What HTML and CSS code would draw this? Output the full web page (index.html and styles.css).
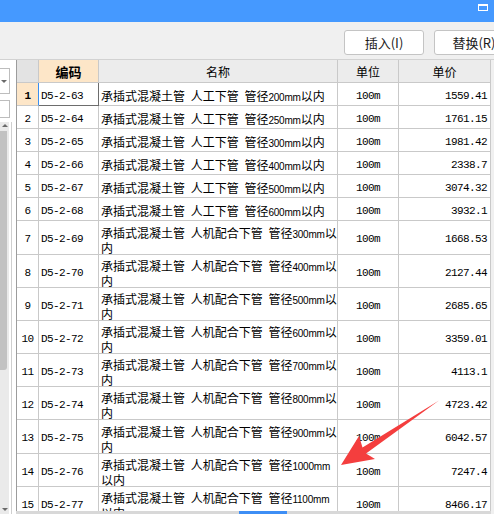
FILE: index.html
```html
<!DOCTYPE html>
<html lang="zh">
<head>
<meta charset="utf-8">
<link rel="stylesheet" href="styles.css">
</head>
<body>
<div class="titlebar"><div class="max"></div></div>
<div class="toolbar">
  <button class="btn">插入(I)</button>
  <button class="btn">替换(R)</button>
</div>
<div class="main">
  <div class="side">
    <div class="combo"><span class="tri-down"></span></div>
    <div class="input"></div>
    <div class="vscroll">
      <span class="tri-up"></span>
      <div class="thumb"></div>
      <span class="tri-down low"></span>
    </div>
  </div>
  <div class="right">
    <div class="grid">
      <div class="c h corner"></div>
      <div class="c h sel">编码</div>
      <div class="c h">名称</div>
      <div class="c h">单位</div>
      <div class="c h">单价</div>

      <div class="c m num sel">1</div>
      <div class="c m code focus">D5-2-63</div>
      <div class="c name"><span>承插式混凝土管 人工下管 管径<span class="l">200mm</span>以内</span></div>
      <div class="c m unit">100m</div>
      <div class="c m price">1559.41</div>

      <div class="c m num">2</div>
      <div class="c m code">D5-2-64</div>
      <div class="c name"><span>承插式混凝土管 人工下管 管径<span class="l">250mm</span>以内</span></div>
      <div class="c m unit">100m</div>
      <div class="c m price">1761.15</div>

      <div class="c m num">3</div>
      <div class="c m code">D5-2-65</div>
      <div class="c name"><span>承插式混凝土管 人工下管 管径<span class="l">300mm</span>以内</span></div>
      <div class="c m unit">100m</div>
      <div class="c m price">1981.42</div>

      <div class="c m num">4</div>
      <div class="c m code">D5-2-66</div>
      <div class="c name"><span>承插式混凝土管 人工下管 管径<span class="l">400mm</span>以内</span></div>
      <div class="c m unit">100m</div>
      <div class="c m price">2338.7</div>

      <div class="c m num">5</div>
      <div class="c m code">D5-2-67</div>
      <div class="c name"><span>承插式混凝土管 人工下管 管径<span class="l">500mm</span>以内</span></div>
      <div class="c m unit">100m</div>
      <div class="c m price">3074.32</div>

      <div class="c m num">6</div>
      <div class="c m code">D5-2-68</div>
      <div class="c name"><span>承插式混凝土管 人工下管 管径<span class="l">600mm</span>以内</span></div>
      <div class="c m unit">100m</div>
      <div class="c m price">3932.1</div>

      <div class="c m num">7</div>
      <div class="c m code">D5-2-69</div>
      <div class="c name two"><span>承插式混凝土管 人机配合下管 管径<span class="l">300mm</span>以<br>内</span></div>
      <div class="c m unit">100m</div>
      <div class="c m price">1668.53</div>

      <div class="c m num">8</div>
      <div class="c m code">D5-2-70</div>
      <div class="c name two"><span>承插式混凝土管 人机配合下管 管径<span class="l">400mm</span>以<br>内</span></div>
      <div class="c m unit">100m</div>
      <div class="c m price">2127.44</div>

      <div class="c m num">9</div>
      <div class="c m code">D5-2-71</div>
      <div class="c name two"><span>承插式混凝土管 人机配合下管 管径<span class="l">500mm</span>以<br>内</span></div>
      <div class="c m unit">100m</div>
      <div class="c m price">2685.65</div>

      <div class="c m num">10</div>
      <div class="c m code">D5-2-72</div>
      <div class="c name two"><span>承插式混凝土管 人机配合下管 管径<span class="l">600mm</span>以<br>内</span></div>
      <div class="c m unit">100m</div>
      <div class="c m price">3359.01</div>

      <div class="c m num">11</div>
      <div class="c m code">D5-2-73</div>
      <div class="c name two"><span>承插式混凝土管 人机配合下管 管径<span class="l">700mm</span>以<br>内</span></div>
      <div class="c m unit">100m</div>
      <div class="c m price">4113.1</div>

      <div class="c m num">12</div>
      <div class="c m code">D5-2-74</div>
      <div class="c name two"><span>承插式混凝土管 人机配合下管 管径<span class="l">800mm</span>以<br>内</span></div>
      <div class="c m unit">100m</div>
      <div class="c m price">4723.42</div>

      <div class="c m num">13</div>
      <div class="c m code">D5-2-75</div>
      <div class="c name two"><span>承插式混凝土管 人机配合下管 管径<span class="l">900mm</span>以<br>内</span></div>
      <div class="c m unit">100m</div>
      <div class="c m price">6042.57</div>

      <div class="c m num">14</div>
      <div class="c m code">D5-2-76</div>
      <div class="c name two"><span>承插式混凝土管 人机配合下管 管径<span class="l">1000mm</span><br>以内</span></div>
      <div class="c m unit">100m</div>
      <div class="c m price">7247.4</div>

      <div class="c m num">15</div>
      <div class="c m code">D5-2-77</div>
      <div class="c name two"><span>承插式混凝土管 人机配合下管 管径<span class="l">1100mm</span><br>以内</span></div>
      <div class="c m unit">100m</div>
      <div class="c m price">8466.17</div>
    </div>
    <div class="hscroll"><div class="hthumb"></div></div>
  </div>
</div>
<svg class="arrow" width="494" height="514" viewBox="0 0 494 514">
  <polygon points="439,400.5 362.5,447.5 359,436 341,465 375,459 366,453.5" fill="#f43e3e"/>
</svg>
</body>
</html>
```
FILE: styles.css
```css
* {
  box-sizing: border-box;
  margin: 0;
  padding: 0;
}

body {
  width: 494px;
  height: 514px;
  overflow: hidden;
  background: #f0f0f0;
  font-family: "Noto Sans CJK SC", sans-serif;
  position: relative;
}

.titlebar {
  height: 22px;
  background: #4599ff;
  display: flex;
  justify-content: flex-end;
  padding: 4px 6px 0 0;
}

.max {
  width: 10px;
  height: 7px;
  border: 1px solid #fff;
  border-top-width: 2px;
}

.toolbar {
  height: 38px;
  border-bottom: 1px solid #d2d2d2;
  display: flex;
  gap: 10px;
  padding: 8px 0 0 344px;
  overflow: hidden;
}

.btn {
  flex: none;
  width: 80px;
  height: 25px;
  background: #fff;
  border: 1px solid #c4c4c4;
  border-radius: 3px;
  font-family: "Noto Sans CJK SC", sans-serif;
  font-size: 13px;
  color: #1a1a1a;
  display: flex;
  align-items: center;
  justify-content: center;
}

.main {
  display: flex;
  height: 454px;
}

.side {
  width: 16px;
  flex: none;
  background: #fff;
  display: flex;
  flex-direction: column;
  padding-top: 8px;
}

.combo {
  width: 10px;
  height: 26px;
  border: 1px solid #bdbdbd;
  border-left: none;
  display: flex;
  align-items: center;
  padding-left: 1px;
}

.tri-down {
  width: 0;
  height: 0;
  border-top: 3px solid #6a6a6a;
  border-left: 3px solid transparent;
  border-right: 3px solid transparent;
}

.tri-up {
  width: 0;
  height: 0;
  margin: 2px 0 0 2px;
  border-bottom: 3px solid #6a6a6a;
  border-left: 3px solid transparent;
  border-right: 3px solid transparent;
}

.input {
  width: 10px;
  height: 18px;
  margin-top: 6px;
  border: 1px solid #bdbdbd;
  border-left: none;
}

.vscroll {
  margin-top: 4px;
  flex: 1;
  width: 12px;
  border-right: 1px solid #cfcfcf;
  background: linear-gradient(to right, #eaeaea 9px, #fff 9px);
  display: flex;
  flex-direction: column;
}

.thumb {
  margin-top: 4px;
  width: 7px;
  height: 239px;
  background: #c2c2c2;
  border-radius: 0 0 3px 0;
}

.low {
  margin: auto 0 3px 2px;
}

.right {
  display: flex;
  flex-direction: column;
  width: 475px;
  flex: none;
}

.grid {
  height: 451px;
  overflow: hidden;
  display: grid;
  grid-template-columns: 22px 60px 239px 61px 92px;
  grid-template-rows: repeat(7, 23px) 34px repeat(5, 33px) 34px 33px 33px;
  border-left: 1px solid #9c9c9c;
  background: #fff;
}

.hscroll {
  height: 3px;
  background: #d8d8d8;
  display: flex;
}

.hthumb {
  margin-left: 223px;
  width: 48px;
  background: #3d8ef5;
}

.c {
  border-right: 1px solid #c9c9c9;
  border-bottom: 1px solid #c9c9c9;
  display: flex;
  align-items: center;
  padding-top: 3px;
  font-size: 12px;
  color: #000;
  white-space: nowrap;
  overflow: hidden;
}

.h {
  background: #ececec;
  justify-content: center;
  padding-top: 1px;
}

.h.corner {
  background: #e3e3e3;
}

.h.sel {
  background: #fde6c8;
  font-weight: bold;
  font-size: 13px;
}

.m {
  font-family: "Liberation Mono", monospace;
  font-size: 11px;
  letter-spacing: -0.6px;
}

.num {
  justify-content: center;
}

.num.sel {
  background: #fde6c8;
  font-weight: bold;
  border-right-color: #3b8ff0;
}

.code {
  padding-left: 2px;
}

.focus {
  border-right-color: #6d6d6d;
  border-bottom-color: #6d6d6d;
}

.unit {
  justify-content: center;
}

.price {
  justify-content: flex-end;
  padding-right: 3px;
}

.name {
  padding-left: 2px;
  word-spacing: 3px;
}

.name .l {
  font-family: "Liberation Sans", sans-serif;
  font-size: 10px;
  letter-spacing: -0.2px;
  word-spacing: 0;
}

.two {
  padding-top: 4px;
}

.two span {
  line-height: 13px;
}

.arrow {
  position: absolute;
  top: 0;
  left: 0;
  pointer-events: none;
}
```
